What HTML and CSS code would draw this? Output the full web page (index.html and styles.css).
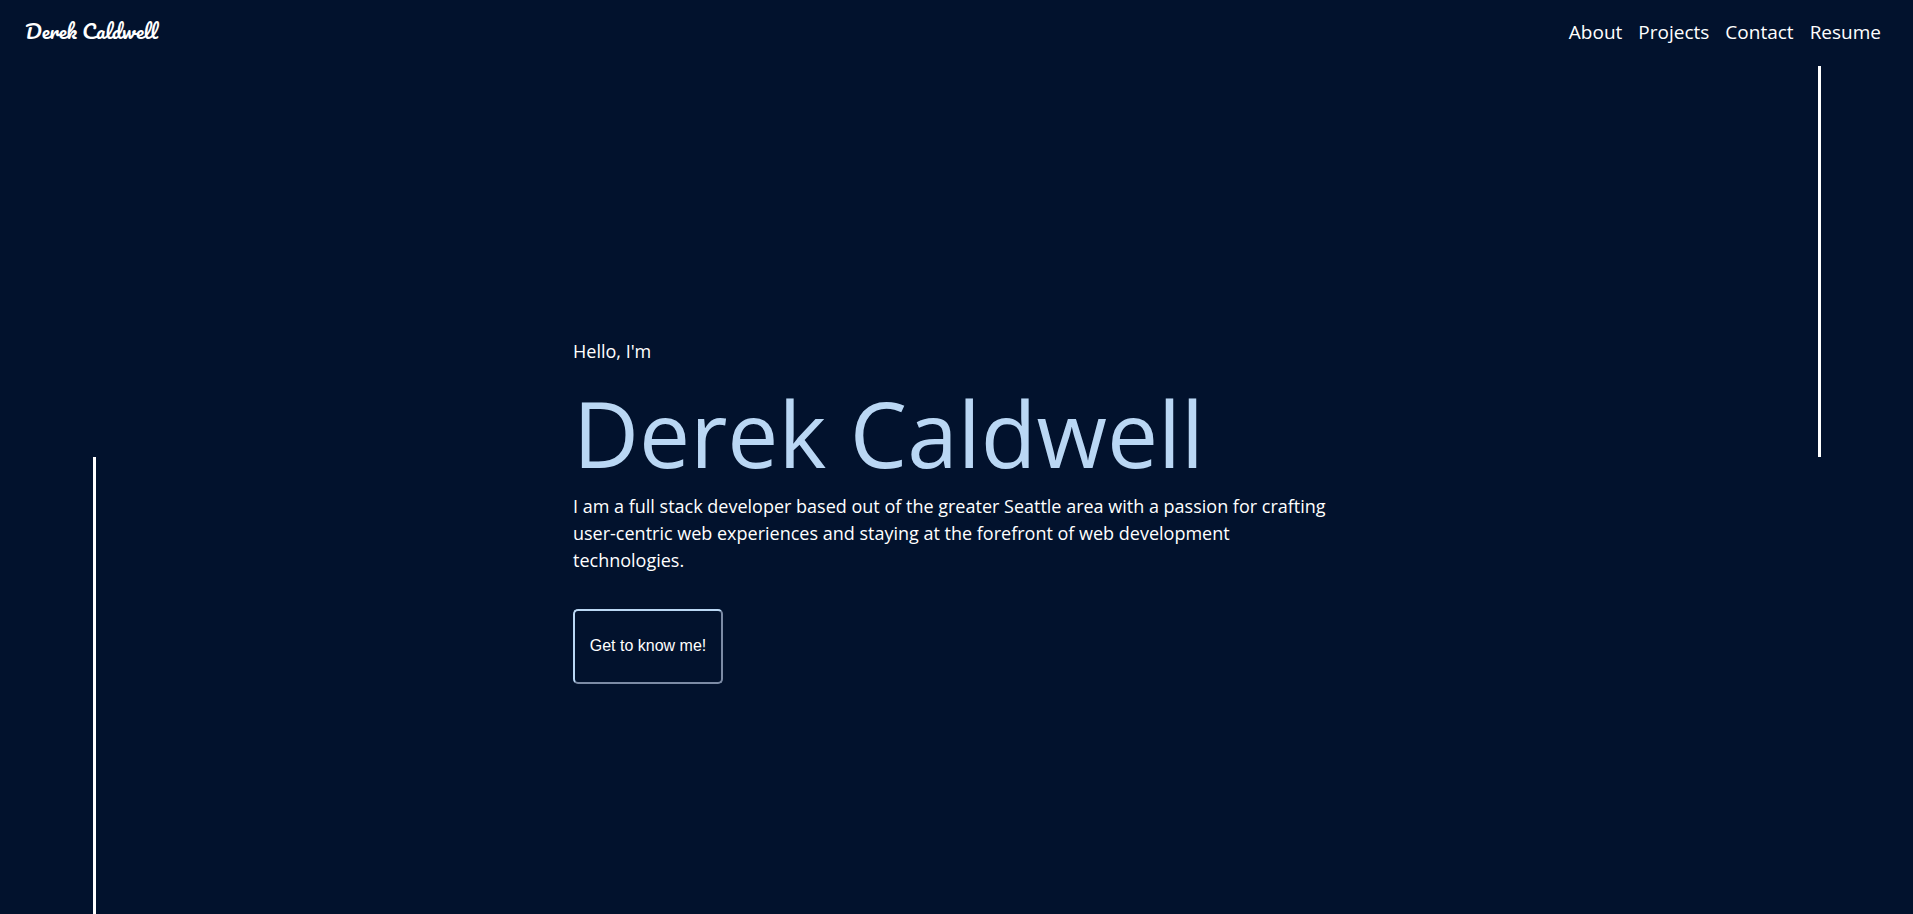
FILE: index.html
```html
<!DOCTYPE html>
<html lang="en">
<head>
<meta charset="utf-8">
<meta name="viewport" content="width=device-width, initial-scale=1">
<title>Derek Caldwell</title>
<link rel="stylesheet" href="styles.css">
</head>
<body>
<header class="header">
  <a class="logo" href="#home">Derek Caldwell</a>
  <nav class="nav">
    <a class="nav-link" href="#about">About</a>
    <a class="nav-link" href="#projects">Projects</a>
    <a class="nav-link" href="#contact">Contact</a>
    <a class="nav-link" href="#resume">Resume</a>
  </nav>
</header>
<main class="hero" id="home">
  <div class="line line-left"></div>
  <section class="intro">
    <p class="greeting">Hello, I'm</p>
    <h1 class="name">Derek Caldwell</h1>
    <p class="bio">I am a full stack developer based out of the greater Seattle area with a passion for crafting user-centric web experiences and staying at the forefront of web development technologies.</p>
    <button class="cta" type="button">Get to know me!</button>
  </section>
  <div class="line line-right"></div>
</main>
</body>
</html>
```
FILE: styles.css
```css
* {
  box-sizing: border-box;
}

body {
  margin: 0;
  min-height: 100vh;
  display: flex;
  flex-direction: column;
  background: #02122d;
  color: #fff;
  font-family: "Segoe UI", "Open Sans", sans-serif;
  font-size: 18px;
  line-height: 27px;
}

.header {
  display: flex;
  align-items: center;
  justify-content: space-between;
  height: 66px;
  padding: 0 32px 2px 25px;
}

.logo {
  color: #fff;
  font-family: Pacifico, cursive;
  font-size: 20px;
  padding-bottom: 4px;
  text-decoration: none;
}

.nav {
  display: flex;
  gap: 16px;
  font-size: 19px;
}

.nav-link {
  color: #fff;
  text-decoration: none;
}

.hero {
  flex: 1;
  display: flex;
  justify-content: space-between;
  padding: 0 92px 0 93px;
}

.line {
  width: 3px;
  background: #fff;
}

.line-left {
  height: 50vh;
  align-self: flex-end;
}

.line-right {
  height: calc(50vh - 66px);
}

.intro {
  width: 768px;
  display: flex;
  flex-direction: column;
  align-items: flex-start;
  justify-content: center;
  padding-top: 42px;
}

.greeting,
.bio {
  margin: 0;
}

.name {
  margin: 8px 0 0;
  color: #bad7f4;
  font-size: 91px;
  font-weight: 400;
  line-height: 120px;
}

.bio {
  margin-bottom: 35px;
}

.cta {
  width: 150px;
  height: 75px;
  border: 2px solid;
  border-color: #bad7f4 #7c8ba5 #7c8ba5 #bad7f4;
  border-radius: 5px;
  background: transparent;
  color: #fff;
  font-family: Arial, "Liberation Sans", sans-serif;
  font-size: 16px;
  padding: 0 0 2px;
}
```
